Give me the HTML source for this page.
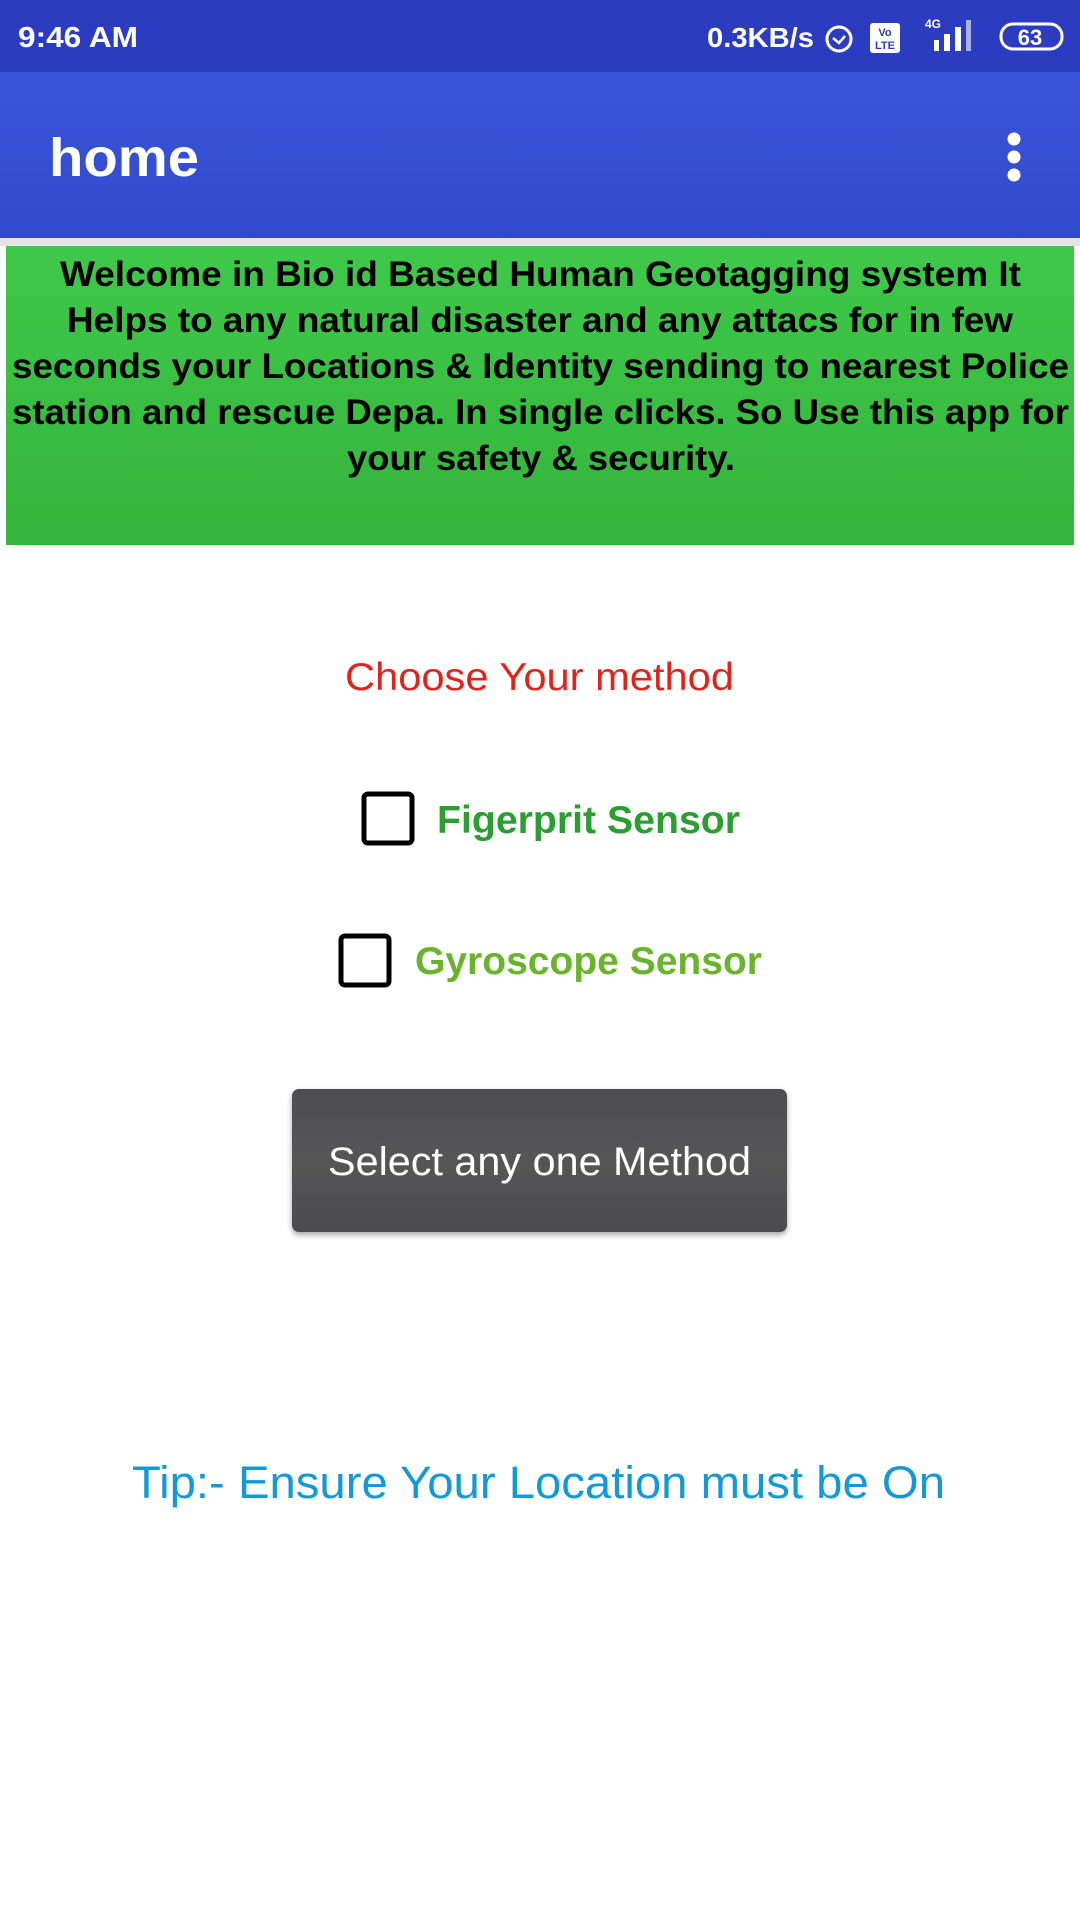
<!DOCTYPE html>
<html><head><meta charset="utf-8"><style>
html,body{margin:0;padding:0;width:1080px;height:1919px;background:#fff;overflow:hidden}
svg{display:block}
</style></head><body>
<svg width="1080" height="1919" xmlns="http://www.w3.org/2000/svg" font-family="Liberation Sans, sans-serif">
<defs>
<linearGradient id="ab" x1="0" y1="0" x2="0" y2="1"><stop offset="0" stop-color="#3a55da"/><stop offset="1" stop-color="#3249cc"/></linearGradient>
<linearGradient id="gr" x1="0" y1="0" x2="0" y2="1"><stop offset="0" stop-color="#3fc84a"/><stop offset="1" stop-color="#34b53b"/></linearGradient>
<linearGradient id="bt" x1="0" y1="0" x2="0" y2="1"><stop offset="0" stop-color="#4e4e50"/><stop offset="0.5" stop-color="#555557"/><stop offset="1" stop-color="#4c4c4e"/></linearGradient>
<filter id="sh" x="-10%" y="-10%" width="120%" height="130%"><feDropShadow dx="0" dy="3" stdDeviation="3" flood-opacity="0.35"/></filter>
</defs>
<rect x="0" y="0" width="1080" height="72" fill="#2b3cc0"/>
<text x="18" y="47" font-size="29" font-weight="bold" fill="#fff" textLength="120" lengthAdjust="spacingAndGlyphs">9:46 AM</text>
<text x="707" y="47" font-size="28" font-weight="bold" fill="#fff" textLength="107" lengthAdjust="spacingAndGlyphs">0.3KB/s</text>
<circle cx="839" cy="39" r="12" fill="none" stroke="#fff" stroke-width="3"/>
<path d="M833 38l6 5 6-7" fill="none" stroke="#fff" stroke-width="2.5"/>
<rect x="870" y="23" width="30" height="30" rx="3" fill="#fff"/>
<text x="885" y="36" font-size="11" font-weight="bold" fill="#2b3cc0" text-anchor="middle">Vo</text>
<text x="885" y="49" font-size="11" font-weight="bold" fill="#2b3cc0" text-anchor="middle">LTE</text>
<text x="925" y="28" font-size="12" font-weight="bold" fill="#fff">4G</text>
<rect x="934" y="40" width="5" height="11" fill="#fff"/><rect x="944" y="34" width="6" height="17" fill="#fff"/><rect x="955" y="27" width="6" height="24" fill="#fff"/><rect x="966" y="20" width="5" height="31" fill="#fff" opacity="0.6"/>
<rect x="1001" y="24" width="61" height="25" rx="12" fill="none" stroke="#fff" stroke-width="3"/>
<text x="1030" y="45" font-size="22" font-weight="bold" fill="#fff" text-anchor="middle">63</text>
<rect x="0" y="72" width="1080" height="166" fill="url(#ab)"/>
<rect x="0" y="238" width="1080" height="8" fill="#e4e4e6"/>
<text x="49" y="176" font-size="54" font-weight="bold" fill="#fff" textLength="150" lengthAdjust="spacingAndGlyphs">home</text>
<circle cx="1014" cy="139" r="6.5" fill="#fff"/><circle cx="1014" cy="157" r="6.5" fill="#fff"/><circle cx="1014" cy="175" r="6.5" fill="#fff"/>
<rect x="6" y="246" width="1068" height="299" fill="url(#gr)"/>
<g font-size="35" font-weight="bold" fill="#000" lengthAdjust="spacingAndGlyphs">
<text x="60" y="286" textLength="961" lengthAdjust="spacingAndGlyphs">Welcome in Bio id Based Human Geotagging system  It</text>
<text x="67" y="332" textLength="946" lengthAdjust="spacingAndGlyphs">Helps to any natural disaster and any attacs for in few</text>
<text x="12" y="378" textLength="1057" lengthAdjust="spacingAndGlyphs">seconds your Locations &amp; Identity sending  to nearest Police</text>
<text x="12" y="424" textLength="1057" lengthAdjust="spacingAndGlyphs">station and rescue Depa. In single clicks. So Use this app for</text>
<text x="347" y="470" textLength="388" lengthAdjust="spacingAndGlyphs">your safety &amp; security.</text>
</g>
<text x="345" y="690" font-size="39" fill="#e0231b" textLength="389" lengthAdjust="spacingAndGlyphs">Choose Your method</text>
<rect x="364" y="794" width="48" height="49" rx="4" fill="none" stroke="#000" stroke-width="5"/>
<text x="437" y="833" font-size="39" font-weight="bold" fill="#2a9e2f" textLength="303" lengthAdjust="spacingAndGlyphs">Figerprit Sensor</text>
<rect x="341" y="936" width="48" height="49" rx="4" fill="none" stroke="#000" stroke-width="5"/>
<text x="415" y="974" font-size="39" font-weight="bold" fill="#6ab42d" textLength="347" lengthAdjust="spacingAndGlyphs">Gyroscope Sensor</text>
<rect x="292" y="1089" width="495" height="143" rx="7" fill="url(#bt)" filter="url(#sh)"/>
<text x="328" y="1175" font-size="40" fill="#fff" textLength="423" lengthAdjust="spacingAndGlyphs">Select any one Method</text>
<text x="132" y="1498" font-size="45" fill="#1199d8" textLength="813" lengthAdjust="spacingAndGlyphs">Tip:- Ensure Your Location must be On</text>
</svg>
</body></html>
